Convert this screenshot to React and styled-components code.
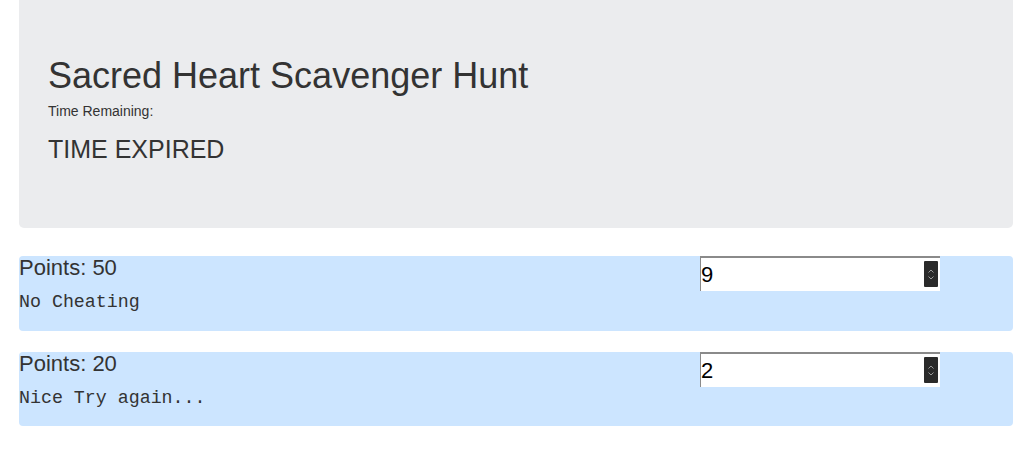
import React from 'react';
import styled, { createGlobalStyle } from 'styled-components';

const GlobalStyle = createGlobalStyle`
  body {
    margin: 0;
    background: #fff;
    font-family: "Liberation Sans", Arial, sans-serif;
    color: #333;
  }
`;

const Page = styled.div`
  padding: 0 21px 0 19px;
`;

const Jumbotron = styled.header`
  background-color: #ebecee;
  border-radius: 0 0 5px 5px;
  height: 228px;
  box-sizing: border-box;
  padding: 54px 29px 0;
`;

const Title = styled.h1`
  font-size: 36px;
  font-weight: 400;
  line-height: 43px;
  margin: 0;
`;

const Label = styled.div`
  font-size: 14px;
  line-height: 20px;
  margin-top: 4px;
`;

const Countdown = styled.div`
  font-size: 25px;
  line-height: 29px;
  margin-top: 14px;
`;

const List = styled.div`
  display: flex;
  flex-direction: column;
  gap: 21px;
  margin-top: 28px;
`;

const Card = styled.div`
  display: flex;
  background-color: #cce5ff;
  border-radius: 4px;
  height: 75px;

  & + & {
    height: 74px;
  }
`;

const Info = styled.div`
  flex: 1;
`;

const Points = styled.div`
  font-size: 22px;
  line-height: 24px;
`;

const Hint = styled.div`
  font-family: "Liberation Mono", "Courier New", monospace;
  font-size: 18.3px;
  line-height: 22px;
  margin-top: 11px;
`;

const Answer = styled.div`
  position: relative;
  width: 313px;
`;

const NumberBox = styled.input`
  box-sizing: border-box;
  width: 240px;
  height: 35px;
  margin: 0;
  padding: 0;
  border: 0;
  border-top: 2px solid #8a8a8a;
  border-left: 1px solid #8a8a8a;
  background: #fff;
  font-family: "Liberation Sans", Arial, sans-serif;
  font-size: 22px;
  color: #000;
  outline: none;
`;

const Spinner = styled.span`
  position: absolute;
  left: 224px;
  top: 5px;
  width: 14px;
  height: 26px;
  background: #2a2a2a;
  border-radius: 1px;
  display: flex;
  flex-direction: column;
  align-items: center;
  justify-content: center;
  gap: 3px;
`;

const Chevron = ({ down }) => (
  <svg width="6" height="4" viewBox="0 0 6 4">
    <path
      d={down ? 'M0.5 0.5 L3 3 L5.5 0.5' : 'M0.5 3.5 L3 1 L5.5 3.5'}
      fill="none"
      stroke="#9a9a9a"
      strokeWidth="1"
    />
  </svg>
);

const clues = [
  { points: 50, hint: 'No Cheating', value: '9' },
  { points: 20, hint: 'Nice Try again...', value: '2' },
];

export default function App() {
  return (
    <>
      <GlobalStyle />
      <Page>
        <Jumbotron>
          <Title>Sacred Heart Scavenger Hunt</Title>
          <Label>Time Remaining:</Label>
          <Countdown>TIME EXPIRED</Countdown>
        </Jumbotron>
        <List>
          {clues.map((c, i) => (
            <Card key={i}>
              <Info>
                <Points>Points: {c.points}</Points>
                <Hint>{c.hint}</Hint>
              </Info>
              <Answer>
                <NumberBox type="text" defaultValue={c.value} readOnly />
                <Spinner>
                  <Chevron />
                  <Chevron down />
                </Spinner>
              </Answer>
            </Card>
          ))}
        </List>
      </Page>
    </>
  );
}
